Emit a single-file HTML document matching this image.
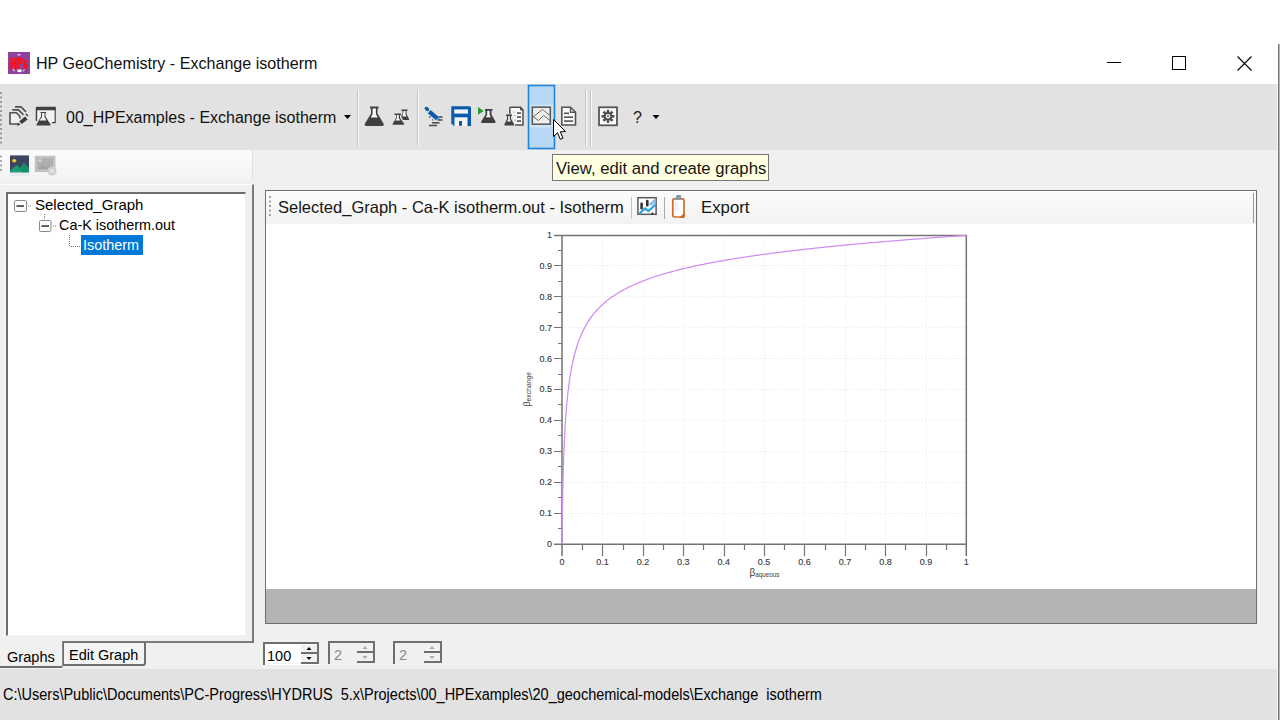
<!DOCTYPE html>
<html><head><meta charset="utf-8">
<style>
*{box-sizing:border-box;margin:0;padding:0}
html,body{width:1280px;height:720px;overflow:hidden;background:#fff;font-family:"Liberation Sans",sans-serif;color:#000}
.a{position:absolute}
.t{position:absolute;white-space:pre;line-height:1}
</style></head><body>
<!-- title bar -->
<div class="a" style="left:0;top:0;width:1280px;height:84px;background:#fff"></div>
<svg class="a" style="left:8px;top:52px" width="22" height="22" viewBox="0 0 22 22">
 <rect width="22" height="22" fill="#8d42a0"/>
 <path d="M2.2 5.5 H4.6 V9.8 H6.2 V5.5 H8.6 V17.2 H6.2 V12.2 H4.6 V17.2 H2.2 Z" fill="#ff1010"/>
 <path d="M9.2 5.2 H12.5 Q15 5.2 15 8.6 Q15 12 12.5 12 H11.6 V17 H9.2 Z M11.6 7.3 V9.9 H12.2 Q12.8 9.9 12.8 8.6 Q12.8 7.3 12.2 7.3 Z" fill="#ff1010"/>
 <path d="M19.5 9.2 Q19.2 7.8 18 7.8 Q15.6 7.8 15.6 12.5 Q15.6 17.2 18 17.2 Q20 17.2 20.2 14.6 V12.5 H17.8 V14 H18.4 Q18.2 15.3 17.9 15.3 Q17.5 15.3 17.5 12.5 Q17.5 9.7 18 9.7 Q18.3 9.7 18.4 10.3 Z" fill="#ff1010"/>
 <rect x="9.5" y="2.2" width="3" height="1.2" fill="#f4e8f6"/>
 <rect x="9.5" y="17.5" width="4" height="2.6" fill="#ffffff"/>
 <path d="M5.2 16.5 L7 18.8 L6.2 19.4 L4.5 17.2 Z" fill="#f0e0f4"/>
 <path d="M17 17.8 L15.2 19.4 L14.5 18.8 L16.3 17.2 Z" fill="#f0e0f4"/>
</svg>
<div class="t" style="left:36px;top:55px;font-size:16.1px;color:#111">HP GeoChemistry - Exchange isotherm</div>
<!-- window controls -->
<div class="a" style="left:1107px;top:62px;width:14px;height:1px;background:#000"></div>
<div class="a" style="left:1172px;top:56px;width:14px;height:14px;border:1px solid #000"></div>
<svg class="a" style="left:1237px;top:56px" width="15" height="15"><path d="M0.5 0.5L14.5 14.5M14.5 0.5L0.5 14.5" stroke="#000" stroke-width="1.1"/></svg>

<!-- toolbar -->
<div class="a" style="left:0;top:84px;width:1278px;height:66px;background:#e2e2e2"></div>


<!-- toolbar icons -->
<svg class="a" style="left:0;top:0" width="1280" height="160" viewBox="0 0 1280 160">
 <!-- gripper -->
 <g fill="#9a9a9a">
  <rect x="0" y="92" width="2" height="2"/><rect x="0" y="96.5" width="2" height="2"/><rect x="0" y="101" width="2" height="2"/><rect x="0" y="105.5" width="2" height="2"/><rect x="0" y="110" width="2" height="2"/><rect x="0" y="114.5" width="2" height="2"/><rect x="0" y="119" width="2" height="2"/><rect x="0" y="123.5" width="2" height="2"/><rect x="0" y="128" width="2" height="2"/><rect x="0" y="132.5" width="2" height="2"/><rect x="0" y="137" width="2" height="2"/><rect x="0" y="141.5" width="2" height="2"/>
 </g>
 <!-- icon1 copy/pen -->
 <g fill="none" stroke="#505050" stroke-width="1.6" stroke-linejoin="round">
  <path d="M15 106.9 H21 L26 111.9"/>
  <path d="M25.8 113.8 L28 116"/>
  <path d="M12.3 109.9 H18.5 L23.5 114.9"/>
  <path d="M19.2 124 H10 V112.7 H16.3 L19.8 116.2 V118.5" fill="#f0f0f0"/>
 </g>
 <path d="M19.3 121.2 L25.2 116.6 L27.6 119.4 L21.7 124 Z" fill="#3c3c3c"/>
 <path d="M17 125.8 L18.2 122.6 L20.4 124.8 Z" fill="#3c3c3c"/>
 <!-- icon2 window flask -->
 <path d="M36.5 107.5 H55 V122.5 H52" fill="none" stroke="#404040" stroke-width="1.5"/>
 <path d="M36.5 107.5 V121" fill="none" stroke="#404040" stroke-width="1.5"/>
 <rect x="36" y="107" width="19.5" height="3.5" fill="#404040"/>
 <rect x="37.5" y="110.5" width="17" height="11.5" fill="#f2f2f2"/>
 <path d="M40.5 112 H46 V113 H45.5 V116.5 L50.5 124.5 Q51 125.5 50 125.5 H37 Q36 125.5 36.5 124.5 L41 116.5 V113 H40.5 Z" fill="#404040"/>
 <path d="M42 113 H44.5 V117 L46.5 120.5 H39.5 L42 117 Z" fill="#f2f2f2"/>
 <!-- dropdown arrow -->
 <path d="M344 115 H351 L347.5 119 Z" fill="#000"/>
 <!-- separators -->
 <rect x="357" y="90" width="1" height="56" fill="#c4c4c4"/><rect x="358" y="90" width="1" height="56" fill="#fafafa"/>
 <rect x="417" y="90" width="1" height="56" fill="#c4c4c4"/><rect x="418" y="90" width="1" height="56" fill="#fafafa"/>
 <rect x="585" y="90" width="1" height="56" fill="#c4c4c4"/><rect x="586" y="90" width="1" height="56" fill="#fafafa"/>
 <rect x="590" y="90" width="1" height="56" fill="#c4c4c4"/><rect x="591" y="90" width="1" height="56" fill="#fafafa"/>
 <!-- big flask -->
 <path d="M370 106.5 H378.5 V108.5 H377.5 V113.5 L383.5 123.5 Q384.5 126 382 126 H366.5 Q364 126 365 123.5 L371 113.5 V108.5 H370 Z" fill="#404040"/>
 <path d="M372.6 108.5 H375.9 V114 L377.8 117.5 H370.7 L372.6 114 Z" fill="#fbfbfb"/>
 <!-- small flasks -->
 <path d="M401.5 109.5 H407.5 V111 H406.5 V114 L409 119 Q409.5 120 408.5 120 H403 L401 116 L402.5 114 V111 H401.5 Z" fill="#404040"/>
 <path d="M403.5 111 H405.5 V114.5 L406.5 116.5 H402.5 Z" fill="#f8f8f8"/>
 <path d="M394.5 113.5 H401 V115 H400 V118 L404 123.5 Q404.5 124.8 403.5 124.8 H393 Q392 124.8 392.8 123.5 L396 118 V115 H394.5 Z" fill="#404040"/>
 <path d="M396.8 115 H398.8 V118.5 L400.5 120.5 H395.2 L396.8 118.5 Z" fill="#f8f8f8"/>
 <!-- pen icon -->
 <ellipse cx="426.9" cy="108.9" rx="2.6" ry="1.7" transform="rotate(40 426.9 108.9)" fill="#0a5bab"/>
 <path d="M427.8 113.2 L430.6 110 L438.8 117 L436 120.2 Z" fill="#0a5bab"/>
 <path d="M436 120.2 L438.8 117 L440.2 120.8 Z" fill="#5a8fc8"/>
 <g fill="#505050"><rect x="438.5" y="116.2" width="4" height="1.6"/><rect x="438.5" y="119.2" width="4" height="1.6"/><rect x="432" y="122" width="7.5" height="1.6"/><rect x="429" y="124.7" width="8" height="1.6"/><rect x="429" y="116.3" width="1.5" height="1.5"/><rect x="432" y="119.3" width="1.2" height="1.2"/></g>
 <!-- save -->
 <path d="M451.3 106.3 H469.5 Q471 106.3 471 108 V126 H454 L451.3 123.3 Z" fill="#0a5bab"/>
 <rect x="454.2" y="109.4" width="13.8" height="4.2" fill="#f4f4f4"/>
 <rect x="454.5" y="117.3" width="13" height="8.7" fill="#f4f4f4"/>
 <rect x="459" y="121" width="3" height="4.8" fill="#0a5bab"/>
 <!-- play flask -->
 <path d="M478 107 V114.8 L483.8 110.9 Z" fill="#2a9a2a"/>
 <path d="M485 109 H492.5 V110.7 H491.5 V114.5 L495.5 121.5 Q496 123 494.5 123 H482 Q480.5 123 481.2 121.5 L485.5 114.5 V110.7 H485 Z" fill="#404040"/>
 <path d="M487.2 110.7 H489.6 V115 L491 117.3 H485.7 L487.2 115 Z" fill="#f8f8f8"/>
 <!-- doc flask -->
 <path d="M509.8 107.3 H520.5 L523 110 V125 H515" fill="#f8f8f8" stroke="#505050" stroke-width="1.5"/>
 <path d="M509.8 107.3 V114" fill="none" stroke="#505050" stroke-width="1.5"/>
 <path d="M520.5 107.3 V110 H523" fill="#505050" stroke="#505050" stroke-width="1"/>
 <g fill="#505050"><rect x="517" y="112.3" width="4" height="1.6"/><rect x="517" y="116.3" width="4" height="1.6"/><rect x="517" y="120.3" width="4" height="1.6"/></g>
 <g fill="#909090"><rect x="513" y="111.5" width="1.2" height="1.2"/><rect x="514.5" y="115" width="1.2" height="1.2"/><rect x="514.5" y="119.5" width="1.2" height="1.2"/></g>
 <path d="M506 114.5 H512 V116 H511 V119 L514 124 Q514.5 125.5 513.5 125.5 H505 Q504 125.5 504.5 124 L507 119 V116 H506 Z" fill="#404040"/>
 <path d="M508.2 116 H509.8 V119.5 L511 121.5 H507 L508.2 119.5 Z" fill="#f8f8f8"/>
 <!-- highlight button -->
 <rect x="528.5" y="85.5" width="26" height="63" fill="#b7d7f3" stroke="#1b86e2" stroke-width="1.6"/>
 <rect x="530" y="104.5" width="23" height="23" fill="#e6eef6" opacity="0.55"/>
 <!-- graph icon -->
 <rect x="532.3" y="107.2" width="18" height="17" fill="#efefef" stroke="#5d5d5d" stroke-width="1.6"/>
 <path d="M533 117 L542.5 109.5 L550 115.5" fill="none" stroke="#6a6a6a" stroke-width="1"/>
 <path d="M533 116.5 L538.5 120.5 L543.5 115.5 L550 120.5" fill="none" stroke="#6a6a6a" stroke-width="1"/>
 <!-- doc -->
 <path d="M561.8 107.3 H570.5 L575.5 112.3 V125 H561.8 Z" fill="#f8f8f8" stroke="#555" stroke-width="1.6"/>
 <path d="M570.5 107.3 V112.3 H575.5" fill="none" stroke="#555" stroke-width="1.4"/>
 <g fill="#555"><rect x="564" y="112.5" width="5" height="1.6"/><rect x="564" y="116.4" width="9" height="1.6"/><rect x="564" y="120.3" width="9" height="1.6"/></g>
 <!-- gear box -->
 <rect x="599" y="107.3" width="18" height="18" fill="#fdfdfd" stroke="#555" stroke-width="1.8"/>
 <g transform="translate(608 116.3)" fill="#505050">
  <circle r="4.3"/>
  <rect x="-1.3" y="-6.5" width="2.6" height="13"/><rect x="-6.5" y="-1.3" width="13" height="2.6"/>
  <rect x="-1.3" y="-6.5" width="2.6" height="13" transform="rotate(45)"/><rect x="-6.5" y="-1.3" width="13" height="2.6" transform="rotate(45)"/>
  <circle r="2.2" fill="#fdfdfd"/><circle r="1" fill="#505050"/>
 </g>
 <!-- help -->
 <text x="633" y="123.3" font-family="Liberation Sans" font-size="16" fill="#1a1a1a">?</text>
 <path d="M652.5 115 H659.5 L656 119 Z" fill="#000"/>
 <!-- cursor -->
 <path d="M553.5 119.5 V136.5 L557.5 132.8 L560.3 139.3 L563 138.1 L560.3 131.8 L565.5 131.5 Z" fill="#fff" stroke="#000" stroke-width="1" stroke-linejoin="round"/>
</svg>
<div class="t" style="left:66px;top:110px;font-size:16px;color:#111">00_HPExamples - Exchange isotherm</div>

<!-- main body -->
<div class="a" style="left:0;top:150px;width:1278px;height:519px;background:#f0f0f0"></div>


<!-- left small toolbar -->
<div class="a" style="left:0;top:150px;width:253px;height:29px;background:linear-gradient(#fcfcfc,#f3f3f3);border-top-right-radius:4px;border-right:1px solid #e0e0e0"></div>
<svg class="a" style="left:0;top:149px" width="60" height="32" viewBox="0 149 60 32">
 <g fill="#a8a8a8"><rect x="0" y="155.5" width="2" height="2"/><rect x="0" y="160" width="2" height="2"/><rect x="0" y="164.5" width="2" height="2"/><rect x="0" y="169" width="2" height="2"/></g>
 <rect x="9.5" y="172" width="20" height="4" fill="#e6ecf0"/>
 <rect x="10" y="155.4" width="19" height="16.8" fill="#3d4660"/>
 <ellipse cx="14.2" cy="160.7" rx="2.2" ry="1.7" fill="#f2c62c"/>
 <path d="M10 171 L16.6 165 L20 168 L24 163 L29 168.5 V172.2 H10 Z" fill="#1b9e76"/>
 <path d="M20 168 L24 163 L29 168.5 V172.2 H22 Z" fill="#168e69"/>
 <rect x="35.3" y="156.3" width="19.6" height="15.2" fill="#c4c4c4" stroke="#bdbdbd" stroke-width="1"/>
 <rect x="37.5" y="158.3" width="15.5" height="11" fill="#b0b0b0"/>
 <circle cx="40" cy="160.5" r="1.4" fill="#d8d8d8"/>
 <path d="M37.5 169.3 L42.5 164.5 L46 167.5 L49 165 L53 168.5 V169.3 Z" fill="#a4a4a4"/>
 <circle cx="52" cy="171" r="4.6" fill="#cfcfcf"/>
 <path d="M50.2 169.2 L53.8 172.8 M53.8 169.2 L50.2 172.8" stroke="#ececec" stroke-width="1.1"/>
</svg>
<!-- tab page -->
<div class="a" style="left:0;top:184px;width:254px;height:459px;border-top:1px solid #fdfdfd;border-right:2px solid #7a7a7a;border-bottom:2px solid #7a7a7a"></div>
<!-- tree -->
<div class="a" style="left:6px;top:192px;width:240px;height:444px;background:#fff;border-top:2px solid #6e6e6e;border-left:2px solid #6e6e6e;border-right:1px solid #f0f0f0;border-bottom:1px solid #f0f0f0"></div>
<div class="a" style="left:4px;top:191px;width:1px;height:446px;background:#fbfbfb"></div>
<!-- tabs -->
<div class="a" style="left:0;top:641px;width:63px;height:27px;border-right:1px solid #8a8a8a;border-bottom:2px solid #6e6e6e;background:#f0f0f0;border-bottom-right-radius:2px"></div>
<div class="a" style="left:63px;top:642px;width:83px;height:24px;border:2px solid #6e6e6e;border-left:1px solid #6e6e6e;border-top:1px solid #6e6e6e;background:#f4f4f4;border-bottom-right-radius:3px"></div>
<div class="t" style="left:7px;top:649px;font-size:15.5px;transform:scaleX(0.94);transform-origin:0 0">Graphs</div>
<div class="t" style="left:69px;top:647px;font-size:15.5px;transform:scaleX(0.935);transform-origin:0 0">Edit Graph</div>

<!-- graph panel -->
<div class="a" style="left:265px;top:190px;width:992px;height:434px;background:#fff;border:1px solid #6e6e6e;border-width:1px 1px 1px 1px"></div>
<div class="a" style="left:266px;top:191px;width:990px;height:33px;background:linear-gradient(#fcfcfc,#f2f2f2)"></div>
<div class="a" style="left:1253px;top:193px;width:1px;height:30px;background:#9a9a9a"></div>
<div class="a" style="left:266px;top:589px;width:990px;height:34px;background:#b4b4b4"></div>
<div class="t" style="left:278px;top:199px;font-size:16.5px;color:#151515">Selected_Graph - Ca-K isotherm.out - Isotherm</div>
<div class="t" style="left:701px;top:200px;font-size:16.8px;color:#151515">Export</div>
<svg class="a" style="left:266px;top:191px" width="430" height="33" viewBox="266 191 430 33">
 <g fill="#a0a0a0"><rect x="269" y="196" width="2" height="2"/><rect x="269" y="200.5" width="2" height="2"/><rect x="269" y="205" width="2" height="2"/><rect x="269" y="209.5" width="2" height="2"/><rect x="269" y="214" width="2" height="2"/></g>
 <rect x="631" y="197" width="1" height="22" fill="#c2c2c2"/>
 <rect x="664" y="197" width="1" height="22" fill="#a8a8a8"/>
 <rect x="637.9" y="197.7" width="18.2" height="16.6" fill="#fff" stroke="#5a5a5a" stroke-width="1.5"/>
 <rect x="640.3" y="202.5" width="2.6" height="7" rx="1.2" fill="#333"/>
 <rect x="646" y="199.8" width="2.6" height="6.8" rx="1.2" fill="#333"/>
 <path d="M648.5 204 L655.5 198.2 V202.5 L651 206 Z" fill="#8fc3ea"/>
 <path d="M639 214 L645 208.5 L648.5 211 L655.5 204.5" fill="none" stroke="#2aa0e6" stroke-width="2.2"/>
 <path d="M650.5 214.5 L652.5 212 L654 214.5 Z" fill="#333"/>
 <rect x="672.8" y="198.8" width="11.2" height="18.2" rx="1.5" fill="#fff" stroke="#cf6c2c" stroke-width="1.7"/>
 <path d="M684.5 212.5 V217.7 H679.5 Z" fill="#c9651f"/>
 <path d="M676 196 Q676 195 677 195 H680 Q681 195 681 196 V200 H676 Z" fill="#8a98a6"/>
 <path d="M675 210 L676 202 L679 209 Z" fill="none" stroke="#e8c8e8" stroke-width="0.6"/>
</svg>

<!-- chart -->
<svg class="a" style="left:0;top:0" width="1280" height="720" viewBox="0 0 1280 720">
<path d="M602.5 235.4 V544.1 M643.5 235.4 V544.1 M683.5 235.4 V544.1 M724.5 235.4 V544.1 M764.5 235.4 V544.1 M804.5 235.4 V544.1 M845.5 235.4 V544.1 M885.5 235.4 V544.1 M926.5 235.4 V544.1 M966.5 235.4 V544.1 M562.0 513.5 H966.3 M562.0 482.5 H966.3 M562.0 451.5 H966.3 M562.0 420.5 H966.3 M562.0 389.5 H966.3 M562.0 358.5 H966.3 M562.0 327.5 H966.3 M562.0 296.5 H966.3 M562.0 265.5 H966.3 M562.0 235.5 H966.3" stroke="#e8e8e8" stroke-width="1" stroke-dasharray="1 2" fill="none"/>
<path d="M554 544.2 H966.8 M554 235.4 H966.8 M562 234.9 V556 M966.3 234.9 V556" stroke="#747474" stroke-width="1.5" fill="none"/>
<path d="M582.5 544.2 V550 M602.5 544.2 V556.2 M623.5 544.2 V550 M643.5 544.2 V556.2 M663.5 544.2 V550 M683.5 544.2 V556.2 M703.5 544.2 V550 M724.5 544.2 V556.2 M744.5 544.2 V550 M764.5 544.2 V556.2 M784.5 544.2 V550 M804.5 544.2 V556.2 M825.5 544.2 V550 M845.5 544.2 V556.2 M865.5 544.2 V550 M885.5 544.2 V556.2 M905.5 544.2 V550 M926.5 544.2 V556.2 M946.5 544.2 V550 M558 528.5 H562 M554 513.5 H562 M558 497.5 H562 M554 482.5 H562 M558 466.5 H562 M554 451.5 H562 M558 435.5 H562 M554 420.5 H562 M558 404.5 H562 M554 389.5 H562 M558 374.5 H562 M554 358.5 H562 M558 343.5 H562 M554 327.5 H562 M558 312.5 H562 M554 296.5 H562 M558 281.5 H562 M554 265.5 H562 M558 250.5 H562" stroke="#747474" stroke-width="1.2" fill="none"/>
<path d="M562.00 544.10 L562.00 543.72 L562.00 543.70 L562.00 543.69 L562.00 543.68 L562.00 543.67 L562.00 543.66 L562.00 543.64 L562.00 543.63 L562.01 543.62 L562.01 543.60 L562.01 543.59 L562.01 543.57 L562.01 543.56 L562.01 543.54 L562.01 543.52 L562.01 543.51 L562.01 543.49 L562.01 543.47 L562.01 543.45 L562.01 543.44 L562.01 543.42 L562.01 543.40 L562.01 543.38 L562.01 543.36 L562.01 543.33 L562.01 543.31 L562.01 543.29 L562.01 543.27 L562.01 543.24 L562.01 543.22 L562.01 543.19 L562.01 543.16 L562.01 543.14 L562.01 543.11 L562.01 543.08 L562.01 543.05 L562.01 543.02 L562.01 542.99 L562.01 542.96 L562.01 542.92 L562.01 542.89 L562.01 542.85 L562.01 542.82 L562.01 542.78 L562.01 542.74 L562.01 542.70 L562.02 542.66 L562.02 542.62 L562.02 542.58 L562.02 542.53 L562.02 542.49 L562.02 542.44 L562.02 542.40 L562.02 542.35 L562.02 542.30 L562.02 542.24 L562.02 542.19 L562.02 542.13 L562.02 542.08 L562.02 542.02 L562.02 541.96 L562.02 541.90 L562.02 541.83 L562.02 541.77 L562.03 541.70 L562.03 541.63 L562.03 541.56 L562.03 541.49 L562.03 541.42 L562.03 541.34 L562.03 541.26 L562.03 541.18 L562.03 541.09 L562.03 541.01 L562.03 540.92 L562.04 540.83 L562.04 540.73 L562.04 540.64 L562.04 540.54 L562.04 540.44 L562.04 540.33 L562.04 540.23 L562.04 540.12 L562.04 540.00 L562.05 539.89 L562.05 539.77 L562.05 539.64 L562.05 539.52 L562.05 539.39 L562.05 539.25 L562.05 539.12 L562.06 538.98 L562.06 538.83 L562.06 538.68 L562.06 538.53 L562.06 538.37 L562.06 538.21 L562.07 538.05 L562.07 537.88 L562.07 537.70 L562.07 537.52 L562.07 537.34 L562.08 537.15 L562.08 536.96 L562.08 536.76 L562.08 536.56 L562.09 536.35 L562.09 536.13 L562.09 535.91 L562.09 535.68 L562.10 535.45 L562.10 535.21 L562.10 534.97 L562.10 534.72 L562.11 534.46 L562.11 534.19 L562.11 533.92 L562.12 533.65 L562.12 533.36 L562.12 533.07 L562.13 532.77 L562.13 532.46 L562.14 532.15 L562.14 531.83 L562.14 531.49 L562.15 531.16 L562.15 530.81 L562.16 530.45 L562.16 530.09 L562.17 529.72 L562.17 529.33 L562.18 528.94 L562.18 528.54 L562.19 528.13 L562.19 527.71 L562.20 527.28 L562.20 526.84 L562.21 526.40 L562.21 525.94 L562.22 525.46 L562.23 524.98 L562.23 524.49 L562.24 523.99 L562.25 523.47 L562.26 522.95 L562.26 522.41 L562.27 521.86 L562.28 521.30 L562.29 520.73 L562.29 520.14 L562.30 519.55 L562.31 518.94 L562.32 518.31 L562.33 517.68 L562.34 517.03 L562.35 516.37 L562.36 515.70 L562.37 515.01 L562.38 514.31 L562.39 513.59 L562.40 512.86 L562.42 512.12 L562.43 511.37 L562.44 510.60 L562.45 509.81 L562.47 509.01 L562.48 508.20 L562.49 507.37 L562.51 506.53 L562.52 505.68 L562.54 504.80 L562.55 503.92 L562.57 503.02 L562.59 502.10 L562.60 501.18 L562.62 500.23 L562.64 499.27 L562.66 498.30 L562.68 497.31 L562.70 496.31 L562.72 495.29 L562.74 494.26 L562.76 493.21 L562.78 492.15 L562.81 491.07 L562.83 489.98 L562.85 488.88 L562.88 487.76 L562.91 486.63 L562.93 485.48 L562.96 484.32 L562.99 483.15 L563.01 482.15 L563.02 481.96 L563.05 480.76 L563.08 479.54 L563.11 478.31 L563.14 477.07 L563.17 475.82 L563.21 474.55 L563.24 473.27 L563.28 471.98 L563.32 470.67 L563.35 469.36 L563.39 468.03 L563.43 466.69 L563.48 465.34 L563.52 463.98 L563.56 462.61 L563.61 461.23 L563.66 459.84 L563.70 458.44 L563.75 457.03 L563.81 455.61 L563.86 454.18 L563.91 452.74 L563.97 451.29 L564.02 449.96 L564.03 449.84 L564.09 448.38 L564.15 446.91 L564.21 445.43 L564.27 443.95 L564.34 442.45 L564.41 440.96 L564.48 439.46 L564.55 437.95 L564.63 436.43 L564.70 434.92 L564.78 433.39 L564.86 431.87 L564.95 430.34 L565.03 428.80 L565.03 428.79 L565.12 427.26 L565.21 425.72 L565.31 424.18 L565.40 422.63 L565.50 421.08 L565.60 419.53 L565.71 417.98 L565.82 416.43 L565.93 414.87 L566.04 413.32 L566.16 411.76 L566.28 410.21 L566.41 408.65 L566.54 407.10 L566.67 405.55 L566.81 404.00 L566.95 402.45 L567.05 401.28 L567.09 400.90 L567.24 399.35 L567.39 397.80 L567.55 396.26 L567.71 394.72 L567.88 393.19 L568.05 391.65 L568.06 391.52 L568.23 390.12 L568.41 388.60 L568.59 387.07 L568.79 385.55 L568.99 384.04 L569.08 383.37 L569.19 382.53 L569.40 381.02 L569.62 379.52 L569.84 378.03 L570.07 376.54 L570.09 376.42 L571.10 370.38 L572.11 365.06 L573.12 360.33 L574.13 356.08 L575.14 352.22 L576.15 348.71 L577.16 345.48 L578.17 342.50 L579.18 339.74 L580.19 337.17 L581.20 334.77 L582.22 332.52 L583.23 330.40 L584.24 328.40 L585.25 326.51 L586.26 324.72 L587.27 323.02 L588.28 321.40 L589.29 319.86 L590.30 318.39 L591.31 316.98 L592.32 315.63 L593.33 314.34 L594.34 313.09 L595.35 311.89 L596.37 310.74 L597.38 309.63 L598.39 308.56 L599.40 307.52 L600.41 306.52 L601.42 305.55 L602.43 304.61 L603.44 303.70 L604.45 302.82 L605.46 301.97 L606.47 301.13 L607.48 300.32 L608.49 299.54 L609.51 298.77 L610.52 298.02 L611.53 297.30 L612.54 296.59 L613.55 295.90 L614.56 295.22 L615.57 294.56 L616.58 293.92 L617.59 293.29 L618.60 292.67 L619.61 292.07 L620.62 291.48 L621.63 290.91 L622.64 290.34 L623.66 289.79 L624.67 289.25 L625.68 288.71 L626.69 288.19 L627.70 287.68 L628.71 287.18 L629.72 286.69 L630.73 286.20 L631.74 285.73 L632.75 285.26 L633.76 284.80 L634.77 284.35 L635.78 283.91 L636.80 283.47 L637.81 283.04 L638.82 282.62 L639.83 282.21 L640.84 281.80 L641.85 281.39 L642.86 281.00 L643.87 280.61 L644.88 280.22 L645.89 279.84 L646.90 279.47 L647.91 279.10 L648.92 278.74 L649.94 278.38 L650.95 278.03 L651.96 277.68 L652.97 277.34 L653.98 277.00 L654.99 276.66 L656.00 276.33 L657.01 276.01 L658.02 275.68 L659.03 275.37 L660.04 275.05 L661.05 274.74 L662.06 274.43 L663.08 274.13 L664.09 273.83 L665.10 273.54 L666.11 273.24 L667.12 272.95 L668.13 272.67 L669.14 272.39 L670.15 272.11 L671.16 271.83 L672.17 271.56 L673.18 271.29 L674.19 271.02 L675.20 270.75 L676.21 270.49 L677.23 270.23 L678.24 269.97 L679.25 269.72 L680.26 269.47 L681.27 269.22 L682.28 268.97 L683.29 268.73 L684.30 268.49 L685.31 268.25 L686.32 268.01 L687.33 267.77 L688.34 267.54 L689.35 267.31 L690.37 267.08 L691.38 266.85 L692.39 266.63 L693.40 266.41 L694.41 266.19 L695.42 265.97 L696.43 265.75 L697.44 265.54 L698.45 265.32 L699.46 265.11 L700.47 264.90 L701.48 264.69 L702.49 264.49 L703.50 264.28 L704.52 264.08 L705.53 263.88 L706.54 263.68 L707.55 263.48 L708.56 263.28 L709.57 263.09 L710.58 262.90 L711.59 262.70 L712.60 262.51 L713.61 262.32 L714.62 262.14 L715.63 261.95 L716.64 261.76 L717.66 261.58 L718.67 261.40 L719.68 261.22 L720.69 261.04 L721.70 260.86 L722.71 260.68 L723.72 260.51 L724.73 260.33 L725.74 260.16 L726.75 259.99 L727.76 259.81 L728.77 259.64 L729.78 259.48 L730.80 259.31 L731.81 259.14 L732.82 258.98 L733.83 258.81 L734.84 258.65 L735.85 258.49 L736.86 258.32 L737.87 258.16 L738.88 258.00 L739.89 257.85 L740.90 257.69 L741.91 257.53 L742.92 257.38 L743.93 257.22 L744.95 257.07 L745.96 256.92 L746.97 256.77 L747.98 256.61 L748.99 256.46 L750.00 256.32 L751.01 256.17 L752.02 256.02 L753.03 255.87 L754.04 255.73 L755.05 255.58 L756.06 255.44 L757.07 255.30 L758.09 255.15 L759.10 255.01 L760.11 254.87 L761.12 254.73 L762.13 254.59 L763.14 254.45 L764.15 254.32 L765.16 254.18 L766.17 254.04 L767.18 253.91 L768.19 253.77 L769.20 253.64 L770.21 253.50 L771.23 253.37 L772.24 253.24 L773.25 253.11 L774.26 252.98 L775.27 252.85 L776.28 252.72 L777.29 252.59 L778.30 252.46 L779.31 252.33 L780.32 252.21 L781.33 252.08 L782.34 251.95 L783.35 251.83 L784.37 251.71 L785.38 251.58 L786.39 251.46 L787.40 251.34 L788.41 251.21 L789.42 251.09 L790.43 250.97 L791.44 250.85 L792.45 250.73 L793.46 250.61 L794.47 250.49 L795.48 250.37 L796.49 250.26 L797.50 250.14 L798.52 250.02 L799.53 249.91 L800.54 249.79 L801.55 249.68 L802.56 249.56 L803.57 249.45 L804.58 249.33 L805.59 249.22 L806.60 249.11 L807.61 248.99 L808.62 248.88 L809.63 248.77 L810.64 248.66 L811.66 248.55 L812.67 248.44 L813.68 248.33 L814.69 248.22 L815.70 248.11 L816.71 248.01 L817.72 247.90 L818.73 247.79 L819.74 247.68 L820.75 247.58 L821.76 247.47 L822.77 247.37 L823.78 247.26 L824.80 247.16 L825.81 247.05 L826.82 246.95 L827.83 246.84 L828.84 246.74 L829.85 246.64 L830.86 246.54 L831.87 246.43 L832.88 246.33 L833.89 246.23 L834.90 246.13 L835.91 246.03 L836.92 245.93 L837.93 245.83 L838.95 245.73 L839.96 245.63 L840.97 245.53 L841.98 245.44 L842.99 245.34 L844.00 245.24 L845.01 245.14 L846.02 245.05 L847.03 244.95 L848.04 244.85 L849.05 244.76 L850.06 244.66 L851.07 244.57 L852.09 244.47 L853.10 244.38 L854.11 244.28 L855.12 244.19 L856.13 244.10 L857.14 244.00 L858.15 243.91 L859.16 243.82 L860.17 243.73 L861.18 243.63 L862.19 243.54 L863.20 243.45 L864.21 243.36 L865.23 243.27 L866.24 243.18 L867.25 243.09 L868.26 243.00 L869.27 242.91 L870.28 242.82 L871.29 242.73 L872.30 242.64 L873.31 242.55 L874.32 242.46 L875.33 242.38 L876.34 242.29 L877.35 242.20 L878.36 242.11 L879.38 242.03 L880.39 241.94 L881.40 241.86 L882.41 241.77 L883.42 241.68 L884.43 241.60 L885.44 241.51 L886.45 241.43 L887.46 241.34 L888.47 241.26 L889.48 241.17 L890.49 241.09 L891.50 241.01 L892.52 240.92 L893.53 240.84 L894.54 240.76 L895.55 240.67 L896.56 240.59 L897.57 240.51 L898.58 240.43 L899.59 240.35 L900.60 240.26 L901.61 240.18 L902.62 240.10 L903.63 240.02 L904.64 239.94 L905.65 239.86 L906.67 239.78 L907.68 239.70 L908.69 239.62 L909.70 239.54 L910.71 239.46 L911.72 239.38 L912.73 239.30 L913.74 239.22 L914.75 239.15 L915.76 239.07 L916.77 238.99 L917.78 238.91 L918.79 238.83 L919.81 238.76 L920.82 238.68 L921.83 238.60 L922.84 238.53 L923.85 238.45 L924.86 238.37 L925.87 238.30 L926.88 238.22 L927.89 238.14 L928.90 238.07 L929.91 237.99 L930.92 237.92 L931.93 237.84 L932.95 237.77 L933.96 237.69 L934.97 237.62 L935.98 237.55 L936.99 237.47 L938.00 237.40 L939.01 237.32 L940.02 237.25 L941.03 237.18 L942.04 237.10 L943.05 237.03 L944.06 236.96 L945.07 236.89 L946.09 236.81 L947.10 236.74 L948.11 236.67 L949.12 236.60 L950.13 236.53 L951.14 236.45 L952.15 236.38 L953.16 236.31 L954.17 236.24 L955.18 236.17 L956.19 236.10 L957.20 236.03 L958.21 235.96 L959.22 235.89 L960.24 235.82 L961.25 235.75 L962.26 235.68 L963.27 235.61 L964.28 235.54 L965.29 235.47 L966.30 235.40" stroke="#d08cf2" stroke-width="1.25" fill="none"/>
<g font-family="Liberation Sans" font-size="9" fill="#383838" stroke="#383838" stroke-width="0.12"><text x="562.0" y="565" text-anchor="middle">0</text><text x="552" y="546.7" text-anchor="end">0</text><text x="602.4" y="565" text-anchor="middle">0.1</text><text x="552" y="515.8" text-anchor="end">0.1</text><text x="642.9" y="565" text-anchor="middle">0.2</text><text x="552" y="485.0" text-anchor="end">0.2</text><text x="683.3" y="565" text-anchor="middle">0.3</text><text x="552" y="454.1" text-anchor="end">0.3</text><text x="723.7" y="565" text-anchor="middle">0.4</text><text x="552" y="423.2" text-anchor="end">0.4</text><text x="764.1" y="565" text-anchor="middle">0.5</text><text x="552" y="392.4" text-anchor="end">0.5</text><text x="804.6" y="565" text-anchor="middle">0.6</text><text x="552" y="361.5" text-anchor="end">0.6</text><text x="845.0" y="565" text-anchor="middle">0.7</text><text x="552" y="330.6" text-anchor="end">0.7</text><text x="885.4" y="565" text-anchor="middle">0.8</text><text x="552" y="299.7" text-anchor="end">0.8</text><text x="925.9" y="565" text-anchor="middle">0.9</text><text x="552" y="268.9" text-anchor="end">0.9</text><text x="966.3" y="565" text-anchor="middle">1</text><text x="552" y="238.0" text-anchor="end">1</text></g>
<g font-family="Liberation Sans" fill="#3a3a3a"><text x="749.5" y="576" font-size="10">β<tspan font-size="6.3" dy="1">aqueous</tspan></text><text transform="translate(529.5 406.3) rotate(-90)" font-size="8.5">β<tspan font-size="6.8" dy="1.5">exchange</tspan></text></g>
</svg>
<!-- /chart -->
<!-- spinners -->
<div class="a" style="left:263px;top:642px;width:56px;height:23px;background:#fff;border-top:2px solid #6e6e6e;border-left:2px solid #6e6e6e"></div>
<div class="t" style="left:267px;top:649px;font-size:14.5px">100</div>
<div class="a" style="left:328px;top:641px;width:47px;height:23px;background:#f0f0f0;border-top:2px solid #6e6e6e;border-left:2px solid #6e6e6e"></div>
<div class="t" style="left:334px;top:648px;font-size:14.5px;color:#8a8a8a">2</div>
<div class="a" style="left:393px;top:641px;width:49px;height:23px;background:#f0f0f0;border-top:2px solid #6e6e6e;border-left:2px solid #6e6e6e"></div>
<div class="t" style="left:399px;top:648px;font-size:14.5px;color:#8a8a8a">2</div>
<svg class="a" style="left:260px;top:638px" width="190" height="30" viewBox="260 638 190 30">
 <!-- spinner1 buttons -->
 <rect x="301" y="644" width="16" height="19" fill="#f0f0f0"/>
 <rect x="301" y="652" width="16" height="2" fill="#6e6e6e"/>
 <rect x="317" y="642" width="2" height="22" fill="#6e6e6e"/>
 <rect x="301" y="662" width="18" height="2" fill="#6e6e6e"/>
 <rect x="301" y="644" width="15" height="1" fill="#fcfcfc"/>
 <path d="M306.5 650 L309 647 L311.5 650 Z" fill="#000"/>
 <path d="M306.5 657 L309 660 L311.5 657 Z" fill="#000"/>
 <rect x="265" y="663" width="36" height="1" fill="#f4f4f4"/>
 <!-- spinner2 -->
 <rect x="357" y="643" width="16" height="19" fill="#f0f0f0"/>
 <rect x="357" y="651" width="16" height="2" fill="#6e6e6e"/>
 <rect x="373" y="641" width="2" height="22" fill="#6e6e6e"/>
 <rect x="357" y="661" width="18" height="2" fill="#6e6e6e"/>
 <path d="M362.5 649 L365 646 L367.5 649 Z" fill="#a8a8a8"/>
 <path d="M362.5 656 L365 659 L367.5 656 Z" fill="#a8a8a8"/>
 <!-- spinner3 -->
 <rect x="424" y="643" width="16" height="19" fill="#f0f0f0"/>
 <rect x="424" y="651" width="16" height="2" fill="#6e6e6e"/>
 <rect x="440" y="641" width="2" height="22" fill="#6e6e6e"/>
 <rect x="424" y="661" width="18" height="2" fill="#6e6e6e"/>
 <path d="M429.5 649 L432 646 L434.5 649 Z" fill="#a8a8a8"/>
 <path d="M429.5 656 L432 659 L434.5 656 Z" fill="#a8a8a8"/>
</svg>

<svg class="a" style="left:0;top:190px" width="100" height="70" viewBox="0 190 100 70">
 <rect x="14.5" y="200.5" width="12" height="11" rx="1.2" fill="#fbfbfb" stroke="#8a8a8a" stroke-width="1"/>
 <rect x="16.5" y="205.4" width="7.5" height="1.3" fill="#111"/>
 <rect x="39.5" y="220.5" width="11.5" height="11" rx="1.2" fill="#fbfbfb" stroke="#8a8a8a" stroke-width="1"/>
 <rect x="41.5" y="225.4" width="7.5" height="1.3" fill="#111"/>
 <g fill="#7a7a7a">
  <rect x="28" y="205.5" width="1" height="1"/><rect x="30" y="205.5" width="1" height="1"/>
  <rect x="53" y="225.5" width="1" height="1"/><rect x="55" y="225.5" width="1" height="1"/>
  <rect x="44" y="214" width="1" height="1"/><rect x="44" y="216" width="1" height="1"/><rect x="44" y="218" width="1" height="1"/>
  <rect x="69" y="235" width="1" height="1"/><rect x="69" y="237" width="1" height="1"/><rect x="69" y="239" width="1" height="1"/><rect x="69" y="241" width="1" height="1"/><rect x="69" y="243" width="1" height="1"/><rect x="69" y="245" width="1" height="1"/>
  <rect x="71" y="246" width="1" height="1"/><rect x="73" y="246" width="1" height="1"/><rect x="75" y="246" width="1" height="1"/><rect x="77" y="246" width="1" height="1"/><rect x="79" y="246" width="1" height="1"/>
 </g>
</svg>
<!-- tree text -->
<div class="t" style="left:35px;top:197px;font-size:15px">Selected_Graph</div>
<div class="t" style="left:59px;top:218px;font-size:14.4px">Ca-K isotherm.out</div>
<div class="a" style="left:81px;top:235px;width:62px;height:20px;background:#0078d7"></div>
<div class="t" style="left:83px;top:238px;font-size:14.4px;color:#fff">Isotherm</div>

<!-- tooltip -->
<div class="a" style="left:552px;top:154px;width:217px;height:27px;background:#ffffe1;border:1px solid #767676"></div>
<div class="t" style="left:556px;top:161px;font-size:16.7px;color:#151515">View, edit and create graphs</div>

<!-- status bar -->
<div class="a" style="left:0;top:669px;width:1278px;height:51px;background:#e2e2e2"></div>
<div class="t" style="left:3px;top:687px;font-size:15.6px;transform:scaleX(0.93);transform-origin:0 0">C:\Users\Public\Documents\PC-Progress\HYDRUS  5.x\Projects\00_HPExamples\20_geochemical-models\Exchange  isotherm</div>

<div class="a" style="left:1277px;top:84px;width:1px;height:636px;background:#f6f6f6"></div>
<div class="a" style="left:1278px;top:44px;width:1px;height:676px;background:#787878"></div>
<div class="a" style="left:1279px;top:44px;width:1px;height:676px;background:#b4b4b4"></div>
</body></html>
